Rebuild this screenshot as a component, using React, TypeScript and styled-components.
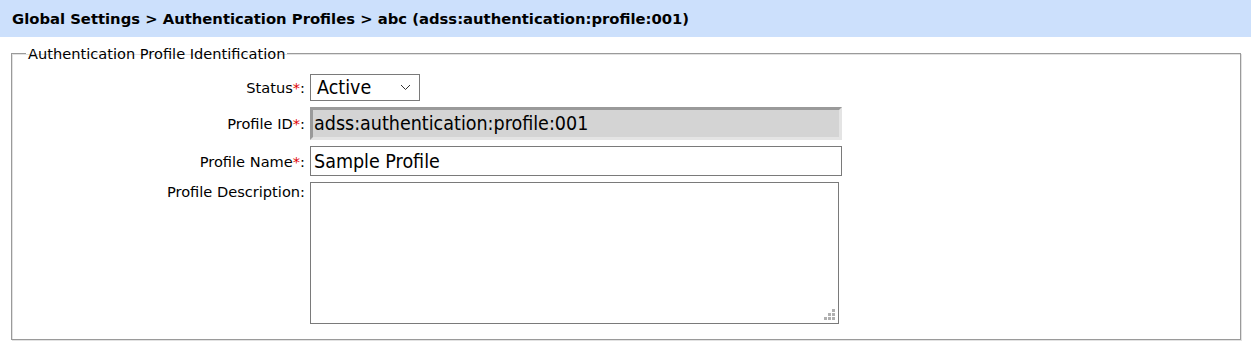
import styled, { createGlobalStyle } from "styled-components";

const GlobalStyle = createGlobalStyle`
  html, body {
    margin: 0;
    padding: 0;
    background: #ffffff;
  }
  body {
    font-family: "DejaVu Sans", sans-serif;
    color: #000000;
  }
`

const Page = styled.div`
  width: 1251px;
  height: 346px;
  overflow: hidden;
`

const Breadcrumb = styled.div`
  height: 37px;
  display: flex;
  align-items: center;
  padding-left: 12px;
  background: #cce0fc;
  font-weight: 700;
  font-size: 14.8px;
`

const Body = styled.div`
  padding: 8px 10px 0 11px;
`

const Fieldset = styled.fieldset`
  margin: 0;
  padding: 0 0 14px 0;
  border: 1px solid #9a9a9a;
  box-shadow: inset 1px 1px 0 #e2e2e2, 1px 1px 0 #e2e2e2;
  height: 295px;
  box-sizing: border-box;
`

const Legend = styled.legend`
  margin-left: 14px;
  padding: 0 2px;
  font-size: 14.6px;
`

const Form = styled.div`
  display: grid;
  grid-template-columns: 292px 1fr;
  column-gap: 6px;
  row-gap: 6px;
  padding-top: 12px;
`

const Label = styled.label<{ $top?: boolean }>`
  text-align: right;
  font-size: 14.6px;
  margin-right: -1px;
  align-self: ${p => (p.$top ? "start" : "center")};
  padding-top: ${p => (p.$top ? "1px" : "0")};
`

const Req = styled.span`
  color: #e00000;
`

const Field = styled.div`
  font-family: "DejaVu Sans Condensed", "DejaVu Sans", sans-serif;
  font-size: 19.5px;
  box-sizing: border-box;
  display: flex;
  align-items: center;
`

const Select = styled(Field)`
  width: 110px;
  height: 27px;
  border: 1px solid #7a7a7a;
  justify-content: space-between;
  padding: 0 8px 0 6px;
`

const Input = styled(Field)<{ $disabled?: boolean }>`
  width: 532px;
  height: ${p => (p.$disabled ? "33px" : "30px")};
  padding-left: ${p => (p.$disabled ? "1px" : "3px")};
  background: ${p => (p.$disabled ? "#d4d4d4" : "#ffffff")};
  border: ${p => (p.$disabled ? "3px solid #e4e4e4" : "1px solid #7a7a7a")};
  border-top-color: ${p => (p.$disabled ? "#9a9a9a" : "#7a7a7a")};
  border-left-color: ${p => (p.$disabled ? "#9a9a9a" : "#7a7a7a")};
`

const TextArea = styled.div`
  position: relative;
  width: 529px;
  height: 142px;
  box-sizing: border-box;
  border: 1px solid #7a7a7a;
`

const Grip = styled.svg`
  position: absolute;
  right: 2px;
  bottom: 2px;
`

export default function App() {
  return (
    <Page>
      <GlobalStyle />
      <Breadcrumb>Global Settings &gt; Authentication Profiles &gt; abc (adss:authentication:profile:001)</Breadcrumb>
      <Body>
        <Fieldset>
          <Legend>Authentication Profile Identification</Legend>
          <Form>
            <Label>Status<Req>*</Req>:</Label>
            <Select>
              <span>Active</span>
              <svg width="11" height="7" viewBox="0 0 11 7">
                <path d="M1 1 L5.5 5.5 L10 1" fill="none" stroke="#333" strokeWidth="1" />
              </svg>
            </Select>
            <Label>Profile ID<Req>*</Req>:</Label>
            <Input $disabled>adss:authentication:profile:001</Input>
            <Label>Profile Name<Req>*</Req>:</Label>
            <Input>Sample Profile</Input>
            <Label $top>Profile Description:</Label>
            <TextArea>
              <Grip width="12" height="12" viewBox="0 0 12 12">
                <g fill="#b0b0b0">
                  <rect x="8" y="0" width="3" height="3" />
                  <rect x="4" y="4" width="3" height="3" />
                  <rect x="8" y="4" width="3" height="3" />
                  <rect x="0" y="8" width="3" height="3" />
                  <rect x="4" y="8" width="3" height="3" />
                  <rect x="8" y="8" width="3" height="3" />
                </g>
              </Grip>
            </TextArea>
          </Form>
        </Fieldset>
      </Body>
    </Page>
  );
}
